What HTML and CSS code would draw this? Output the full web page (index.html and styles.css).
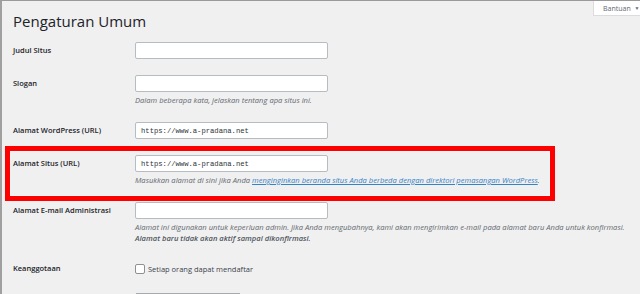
FILE: index.html
```html
<!DOCTYPE html>
<html lang="id">

<head>
    <meta charset="utf-8">
    <meta name="viewport" content="width=device-width, initial-scale=1.0">
    <title>Pengaturan Umum</title>
    <link rel="stylesheet" href="styles.css">
</head>

<body>
    <div class="frame">
        <div class="bantuan">Bantuan <span class="caret">&#9660;</span></div>

        <h1>Pengaturan Umum</h1>

        <form class="settings">
            <div class="row">
                <label class="label" for="blogname">Judul Situs</label>
                <div class="field">
                    <input class="text" type="text" id="blogname">
                </div>
            </div>

            <div class="row">
                <label class="label" for="tagline">Slogan</label>
                <div class="field">
                    <input class="text" type="text" id="tagline">
                    <p class="desc">Dalam beberapa kata, jelaskan tentang apa situs ini.</p>
                </div>
            </div>

            <div class="row">
                <label class="label" for="siteurl">Alamat WordPress (URL)</label>
                <div class="field">
                    <input class="text code" type="text" id="siteurl" value="https://www.a-pradana.net">
                </div>
            </div>

            <div class="row marked">
                <label class="label" for="home">Alamat Situs (URL)</label>
                <div class="field">
                    <input class="text code" type="text" id="home" value="https://www.a-pradana.net">
                    <p class="desc">Masukkan alamat di sini jika Anda <a href="#">menginginkan beranda situs Anda berbeda dengan direktori pemasangan WordPress</a>.</p>
                </div>
                <div class="highlight"></div>
            </div>

            <div class="row">
                <label class="label" for="email">Alamat E-mail Administrasi</label>
                <div class="field">
                    <input class="text" type="text" id="email">
                    <p class="desc">Alamat ini digunakan untuk keperluan admin. Jika Anda mengubahnya, kami akan mengirimkan e-mail pada alamat baru Anda untuk konfirmasi.<br><strong>Alamat baru tidak akan aktif sampai dikonfirmasi.</strong></p>
                </div>
            </div>

            <div class="row">
                <span class="label">Keanggotaan</span>
                <div class="field">
                    <label class="check"><span class="box"></span>Setiap orang dapat mendaftar</label>
                </div>
            </div>

            <div class="row">
                <span class="label"></span>
                <div class="field">
                    <div class="select"></div>
                </div>
            </div>
        </form>
    </div>
</body>

</html>
```

FILE: styles.css
```css
* {
    box-sizing: border-box;
}

html,
body {
    margin: 0;
    height: 100%;
    overflow: hidden;
}

body {
    background: #f0f0f1;
    font-family: "Open Sans", "Noto Sans", sans-serif;
    color: #1d2327;
}

.frame {
    position: relative;
    height: 100%;
    overflow: hidden;
    border-top: 1px solid #9a9a9a;
    border-left: 2px solid #a0a0a0;
    padding-left: 11px;
}

h1 {
    margin: 0;
    padding-top: 9px;
    font-size: 15px;
    font-weight: 400;
    line-height: 22px;
    color: #1d2327;
}

.bantuan {
    position: absolute;
    top: -1px;
    right: 0;
    width: 47px;
    height: 16px;
    background: #fff;
    border: 1px solid #dcdcde;
    border-right: none;
    font-size: 7px;
    line-height: 14px;
    color: #646970;
    padding-left: 9px;
}

.caret {
    font-size: 5px;
    margin-left: 2px;
    vertical-align: 1px;
}

.row {
    position: relative;
    display: grid;
    grid-template-columns: 122px 1fr;
    padding: 8px 0;
}

.row:first-child {
    margin-top: 2px;
}

.label {
    font-size: 7.5px;
    font-weight: 600;
    line-height: 17px;
    color: #1d2327;
}

.text {
    display: block;
    width: 193px;
    height: 17px;
    margin: 0;
    padding: 0 5px;
    background: #fff;
    border: 1px solid #b5bcc2;
    border-radius: 2px;
    font-size: 7.5px;
    color: #2c3338;
}

.code {
    font-family: "Liberation Mono", "DejaVu Sans Mono", monospace;
    font-size: 7.2px;
}

.desc {
    margin: 3px 0 0;
    font-size: 7.6px;
    line-height: 11px;
    font-style: italic;
    color: #646970;
}

.desc strong {
    font-weight: 600;
    color: #50575e;
}

.desc a {
    color: #3582c4;
}

.highlight {
    position: absolute;
    top: -1px;
    left: -8px;
    width: 550px;
    height: 55px;
    border: 5px solid #ff0000;
    box-shadow: inset 0 0 0 1px #f7f7f7;
    pointer-events: none;
}

.check {
    display: flex;
    align-items: center;
    height: 17px;
    font-size: 7.5px;
    color: #3c434a;
}

.box {
    width: 10px;
    height: 10px;
    margin-right: 3px;
    background: #fff;
    border: 1px solid #8c8f94;
    border-radius: 2px;
}

.select {
    width: 104px;
    height: 17px;
    margin-left: 1px;
    border-top: 2px solid #a7aaad;
}
```
